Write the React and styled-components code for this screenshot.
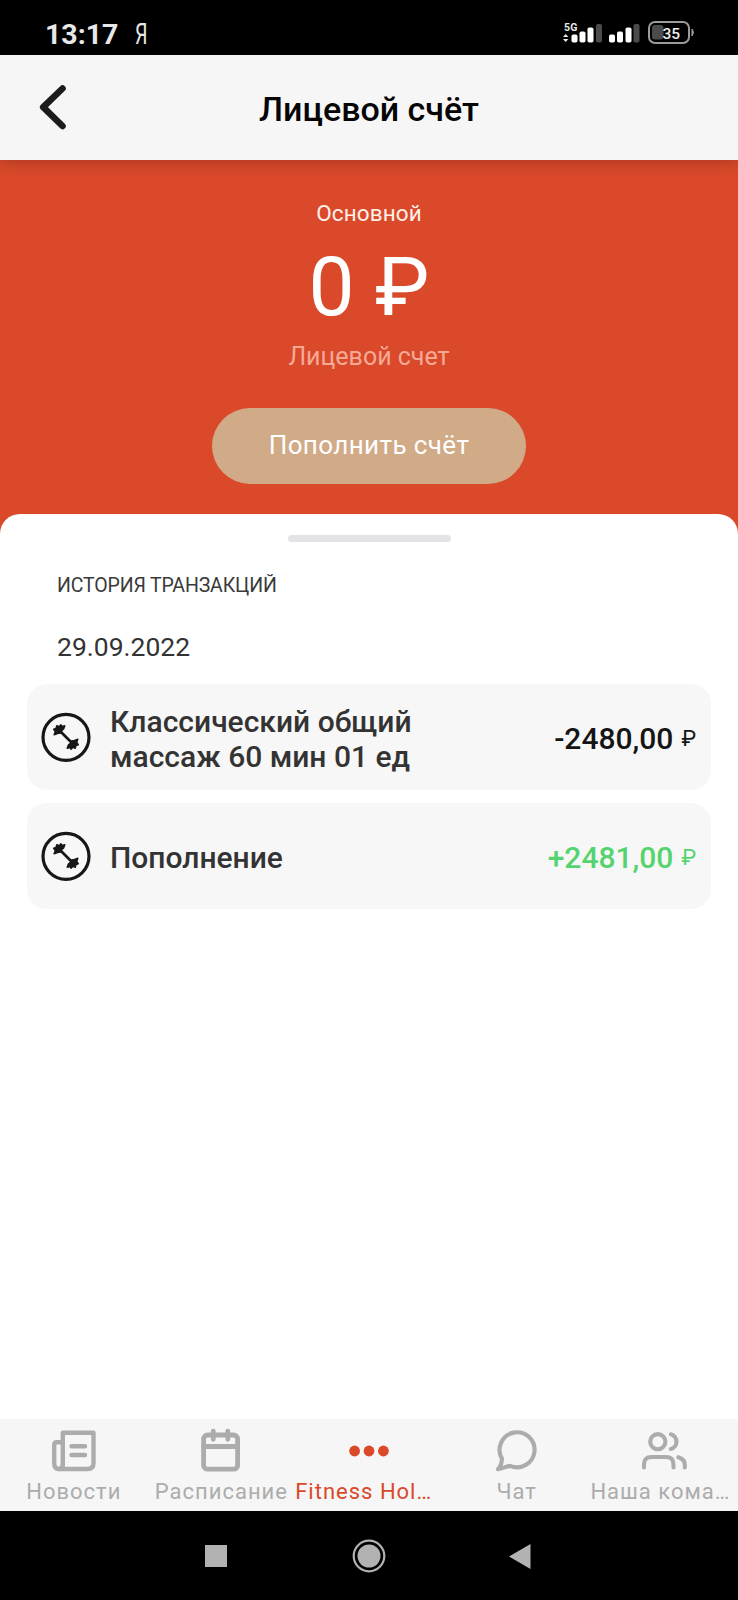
import React from 'react'
import styled, { createGlobalStyle } from 'styled-components'

const GlobalStyle = createGlobalStyle`
* {
box-sizing: border-box;
}

body {
margin: 0;
background: #ffffff;
font-family: Roboto, "Noto Sans", sans-serif;
}
`

const Screen = styled.div`
width: 738px;
height: 1600px;
display: flex;
flex-direction: column;
overflow: hidden;
background: #ffffff;
`

const StatusBar = styled.div`
height: 54.5px;
flex: none;
display: flex;
align-items: flex-start;
justify-content: space-between;
padding: 18px 42px 0 45px;
background: #000000;
color: #e8e8e8;
`

const StatusGroup = styled.div`
display: flex;
align-items: flex-start;
`

const Clock = styled.span`
font-size: 28.5px;
line-height: 34px;
font-weight: 700;
`

const YandexMark = styled.span`
margin-left: 17px;
font-size: 29px;
line-height: 32px;
font-weight: 400;
transform: scaleX(0.68);
transform-origin: left;
`

const Header = styled.header`
height: 105.5px;
flex: none;
display: grid;
grid-template-columns: 100px 1fr 100px;
align-items: center;
background: #f6f6f6;
box-shadow: 0 2px 14px rgba(0, 0, 0, 0.22);
z-index: 1;
`

const BackButton = styled.button`
width: 100px;
height: 105px;
padding: 0 0 0 34px;
border: 0;
background: none;
display: flex;
align-items: center;
`

const Title = styled.h1`
margin: 3.5px 0 0;
text-align: center;
font-size: 34px;
line-height: 40px;
font-weight: 500;
color: #050505;
`

const Hero = styled.section`
height: 374px;
flex: none;
display: flex;
flex-direction: column;
align-items: center;
padding-top: 40px;
background: #d9492a;
color: #ffffff;
`

const AccountName = styled.div`
font-size: 22.5px;
line-height: 27px;
letter-spacing: 0.1px;
color: #fff1ea;
`

const Balance = styled.div`
margin-top: 12px;
font-size: 82px;
line-height: 96px;
`

const AccountType = styled.div`
margin-top: 7px;
font-size: 25px;
line-height: 30px;
color: #f5a994;
`

const TopUpButton = styled.button`
width: 314px;
height: 76px;
margin-top: 36px;
padding: 0 0 3px;
border: 0;
border-radius: 38px;
background: #d1aa88;
color: #ffffff;
font-family: inherit;
font-size: 26px;
letter-spacing: 0.4px;
`

const Sheet = styled.main`
flex: 1;
margin-top: -20px;
padding: 21px 27px 0;
border-radius: 20px 20px 0 0;
background: #ffffff;
display: flex;
flex-direction: column;
`

const Handle = styled.div`
width: 163px;
height: 7px;
flex: none;
align-self: center;
border-radius: 4px;
background: #e4e4e6;
`

const SectionTitle = styled.h2`
margin: 32px 30px 0;
font-size: 19.5px;
line-height: 24px;
font-weight: 400;
letter-spacing: -0.15px;
text-transform: uppercase;
color: #3a3a3a;
`

const DateLabel = styled.div`
margin: 33px 30px 21px;
font-size: 26.5px;
line-height: 32px;
color: #333333;
`

const Transactions = styled.div`
display: flex;
flex-direction: column;
gap: 13px;
`

const Card = styled.div`
height: 106px;
display: flex;
align-items: center;
padding: 0 15px 0 14px;
border-radius: 20px;
background: #f7f7f7;
`

const CardName = styled.div`
width: 330px;
margin: 4px auto 0 19px;
font-size: 30px;
line-height: 35.5px;
font-weight: 500;
color: #333333;
`

const Amount = styled.div`
display: flex;
align-items: center;
gap: 8px;
margin-top: 3px;
font-size: 30px;
line-height: 36px;
font-weight: 500;
color: ${(props) => (props.$income ? '#55d36f' : '#151515')};
`

const Currency = styled.span`
font-size: 22px;
line-height: 36px;
font-weight: 400;
`

const TabBar = styled.nav`
height: 92px;
flex: none;
display: grid;
grid-template-columns: repeat(5, minmax(0, 1fr));
background: #f6f6f6;
`

const Tab = styled.div`
display: flex;
flex-direction: column;
align-items: center;
padding-top: 8px;
color: ${(props) => (props.$active ? '#d9492a' : '#acacac')};
`

const TabLabel = styled.span`
margin-top: 4px;
white-space: nowrap;
font-size: 22px;
line-height: 26px;
letter-spacing: 1px;
${(props) => props.$clipped && 'align-self: flex-start;'}
`

const SystemBar = styled.div`
height: 89px;
flex: none;
display: flex;
align-items: center;
justify-content: space-between;
padding: 1px 207px 0 205px;
background: #000000;
`

const StatusIcons = () => (
    <svg width="134" height="28" viewBox="0 0 134 28" fill="none">
        <text x="2" y="13" fontSize="10.5" fontWeight="700" fill="#e8e8e8" textLength="13.500">5G</text>
        <path d="M1 19l2.7-3 2.7 3zM1 21l2.7 3 2.7-3z" fill="#e8e8e8" />
        <g fill="#ffffff">
            <rect x="9.500" y="16.500" width="6" height="8" rx="1.8" />
            <rect x="17.500" y="13.500" width="6" height="11" rx="1.8" />
            <rect x="25.500" y="9.500" width="6" height="15" rx="1.8" />
            <rect x="47" y="16.500" width="6" height="8" rx="1.8" />
            <rect x="55" y="13.500" width="6" height="11" rx="1.8" />
            <rect x="63.500" y="9.500" width="6" height="15" rx="1.8" />
        </g>
        <g fill="#4b4b4b">
            <rect x="34" y="6" width="6" height="18.500" rx="1.8" />
            <rect x="71.5" y="6" width="6" height="18.500" rx="1.8" />
            <rect x="90" y="7" width="11.500" height="14.500" rx="3" />
        </g>
        <rect x="87" y="4" width="40" height="21" rx="6" stroke="#9c9c9c" strokeWidth="2" />
        <path d="M130 11q3 3.500 0 7z" fill="#9c9c9c" stroke="#9c9c9c" />
        <text x="100.500" y="21" fontSize="15.500" fontWeight="500" fill="#eeeeee" textLength="17.500">35</text>
    </svg>
)

const BackIcon = () => (
    <svg width="40" height="50" viewBox="0 0 40 50" fill="none" stroke="#1c1c1c" strokeWidth="6.600" strokeLinecap="round" strokeLinejoin="round">
        <path d="M28.500 6.500L9.200 25.200L28.500 44" />
    </svg>
)

const DumbbellIcon = () => (
    <svg width="50" height="50" viewBox="0 0 50 50" fill="none" stroke="#171717" strokeLinecap="round" strokeLinejoin="round">
        <circle cx="25" cy="25.300" r="23" strokeWidth="3.200" />
        <path d="M18 18L32 32" strokeWidth="2.800" />
        <g fill="#171717" strokeWidth="1.500">
            <path d="M13.200 22.800L14.300 19.500L12.700 17.300L15 16.400L15.800 13.800L18 14.800L20 12.800L20.600 14.400L23.800 13.800L22.600 17L20.600 18.800L19.400 21L16.500 21.600Z" />
            <path d="M36.800 27.200L35.700 30.500L37.300 32.700L35 33.600L34.200 36.200L32 35.200L30 37.200L29.400 35.600L26.200 36.200L27.400 33L29.400 31.200L30.600 29L33.500 28.400Z" />
        </g>
    </svg>
)

const TabIcon = ({ children, strokeWidth = 4.8 }) => (
    <svg width="48" height="48" viewBox="0 0 48 48" fill="none" stroke="currentColor" strokeWidth={strokeWidth} strokeLinecap="round" strokeLinejoin="round">
        {children}
    </svg>
)

const NewsIcon = () => (
    <TabIcon strokeWidth={4.4}>
        <path d="M12.800 37.500V5.800H43.500V36q0 6-6 6H8.500" />
        <path d="M12.800 15.200H6.600q-2.400 0-2.400 2.600V36q0 6 4.600 6q4 0 4-5" />
        <path d="M21.500 19.300H35M21.500 28H35" />
    </TabIcon>
)

const CalendarIcon = () => (
    <TabIcon>
        <rect x="6.600" y="8" width="34" height="34.200" rx="4" />
        <path d="M6.600 19.500H40.600M16.300 4.200V12.300M30.800 4.200V12.300" />
    </TabIcon>
)

const DotsIcon = () => (
    <TabIcon>
        <g fill="currentColor" stroke="none">
            <circle cx="9.600" cy="24" r="5.400" />
            <circle cx="24" cy="24" r="5.400" />
            <circle cx="38.400" cy="24" r="5.400" />
        </g>
    </TabIcon>
)

const ChatIcon = () => (
    <TabIcon strokeWidth={4.2}>
        <path d="M8.900 31.500A17.500 17.500 0 1 1 17 38.800C13 39.200 9.500 41.800 5 42.200C8 39 8.900 35.500 8.900 31.500Z" />
    </TabIcon>
)

const TeamIcon = () => (
    <TabIcon strokeWidth={4.1}>
        <circle cx="17.800" cy="14.700" r="7.600" />
        <path d="M30.800 7.300A7.600 7.600 0 0 1 30.800 22" />
        <path d="M4 40.500V37.500q0-7.500 7.500-7.500H26q7.500 0 7.500 7.500V40.500" />
        <path d="M38.300 30.200Q44.800 32 44.800 38V40.500" />
    </TabIcon>
)

const transactions = [
    { name: 'Классический общий массаж 60 мин 01 ед', amount: '-2480,00' },
    { name: 'Пополнение', amount: '+2481,00', income: true },
]

const tabs = [
    { label: 'Новости', Icon: NewsIcon },
    { label: 'Расписание', Icon: CalendarIcon },
    { label: 'Fitness Hol…', Icon: DotsIcon, active: true, clipped: true },
    { label: 'Чат', Icon: ChatIcon },
    { label: 'Наша кома…', Icon: TeamIcon, clipped: true },
]

const Transaction = ({ name, amount, income }) => (
    <Card>
        <DumbbellIcon />
        <CardName>{name}</CardName>
        <Amount $income={income}>
            {amount}
            <Currency>₽</Currency>
        </Amount>
    </Card>
)

const App = () => {
    return (
        <Screen>
            <GlobalStyle />
            <StatusBar>
                <StatusGroup>
                    <Clock>13:17</Clock>
                    <YandexMark>Я</YandexMark>
                </StatusGroup>
                <StatusIcons />
            </StatusBar>

            <Header>
                <BackButton aria-label="Назад">
                    <BackIcon />
                </BackButton>
                <Title>Лицевой счёт</Title>
            </Header>

            <Hero>
                <AccountName>Основной</AccountName>
                <Balance>0 ₽</Balance>
                <AccountType>Лицевой счет</AccountType>
                <TopUpButton>Пополнить счёт</TopUpButton>
            </Hero>

            <Sheet>
                <Handle />
                <SectionTitle>История транзакций</SectionTitle>
                <DateLabel>29.09.2022</DateLabel>
                <Transactions>
                    {transactions.map((item) => (
                        <Transaction key={item.name} {...item} />
                    ))}
                </Transactions>
            </Sheet>

            <TabBar>
                {tabs.map(({ label, Icon, active, clipped }) => (
                    <Tab key={label} $active={active}>
                        <Icon />
                        <TabLabel $clipped={clipped}>{label}</TabLabel>
                    </Tab>
                ))}
            </TabBar>

            <SystemBar>
                <svg width="22" height="22" viewBox="0 0 22 22">
                    <rect width="22" height="22" fill="#b2b2b2" />
                </svg>
                <svg width="36" height="34" viewBox="0 0 36 34">
                    <circle cx="19" cy="17" r="15.300" fill="none" stroke="#b2b2b2" strokeWidth="2.200" />
                    <circle cx="19" cy="17" r="11.500" fill="#b2b2b2" />
                </svg>
                <svg width="22" height="25" viewBox="0 0 22 25">
                    <path d="M21.500 0V25L0 12.500Z" fill="#b2b2b2" />
                </svg>
            </SystemBar>
        </Screen>
    )
}

export default App
